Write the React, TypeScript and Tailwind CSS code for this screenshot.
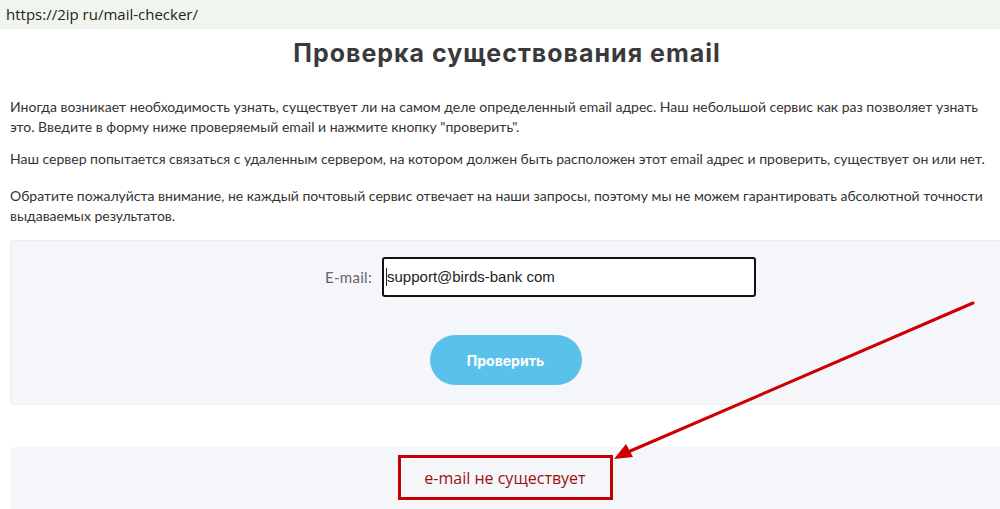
import React from "react";

const BODY = "font-['Lato','Open_Sans',sans-serif]";

function Arrow() {
  return (
    <svg
      className="pointer-events-none absolute left-0 top-0"
      width="1000"
      height="509"
      viewBox="0 0 1000 509"
    >
      <line x1="973" y1="303" x2="628" y2="452" stroke="#cc0000" strokeWidth="3" strokeLinecap="round" />
      <polygon points="614,459 626,444 633,457" fill="#cc0000" />
    </svg>
  );
}

export default function App() {
  return (
    <div className="relative h-[509px] w-[1000px] overflow-hidden bg-white text-[#333]">
      <div className="flex h-[29px] items-center bg-[#f0f6ee] px-[6px] font-['Open_Sans',sans-serif] text-[15px] text-[#222]">
        https://2ip ru/mail-checker/
      </div>

      <h1 className="mt-[7px] pl-[14px] text-center font-['Inter',sans-serif] text-[25px] font-bold leading-[34px] tracking-[1px] text-[#3a3a3c]">
        Проверка существования email
      </h1>

      <div className={`${BODY} mt-[27px] px-[10px] text-[14px] leading-[20px]`}>
        <p>
          Иногда возникает необходимость узнать, существует ли на самом деле определенный email адрес. Наш небольшой
          сервис как раз позволяет узнать это. Введите в форму ниже проверяемый email и нажмите кнопку "проверить".
        </p>
        <p className="mt-[12px]">
          Наш сервер попытается связаться с удаленным сервером, на котором должен быть расположен этот email адрес и
          проверить, существует он или нет.
        </p>
        <p className="mt-[17px]">
          Обратите пожалуйста внимание, не каждый почтовый сервис отвечает на наши запросы, поэтому мы не можем
          гарантировать абсолютной точности выдаваемых результатов.
        </p>
      </div>

      <div className="ml-[10px] mt-[14px] flex h-[165px] flex-col items-center rounded-l-[4px] border border-r-0 border-[#eceff2] bg-[#f4f6f9] pt-[16px]">
        <div className="flex items-center pl-[70px]">
          <label className={`${BODY} mr-[10px] text-[15px] tracking-[0.3px] text-[#666]`}>E-mail:</label>
          <div className="flex h-[40px] w-[374px] items-center rounded-[3px] border-2 border-[#111] bg-white px-[2px] font-['Liberation_Sans',sans-serif] text-[15px] text-[#222]">
            <span className="h-[18px] w-px bg-[#222]" />
            support@birds-bank com
          </div>
        </div>
        <button
          type="button"
          className="mt-[38px] h-[50px] w-[152px] rounded-full bg-[#5ac2ea] font-['Inter',sans-serif] text-[14px] font-bold text-white"
        >
          Проверить
        </button>
      </div>

      <div className="ml-[10px] mt-[42px] flex h-[70px] justify-center rounded-l-[4px] bg-[#f4f6f9] pt-[8px]">
        <div className="flex h-[45px] w-[215px] items-center justify-center border-[3px] border-[#c40000] font-['Open_Sans',sans-serif] text-[16px] text-[#9b1111]">
          e-mail не существует
        </div>
      </div>

      <Arrow />
    </div>
  );
}
